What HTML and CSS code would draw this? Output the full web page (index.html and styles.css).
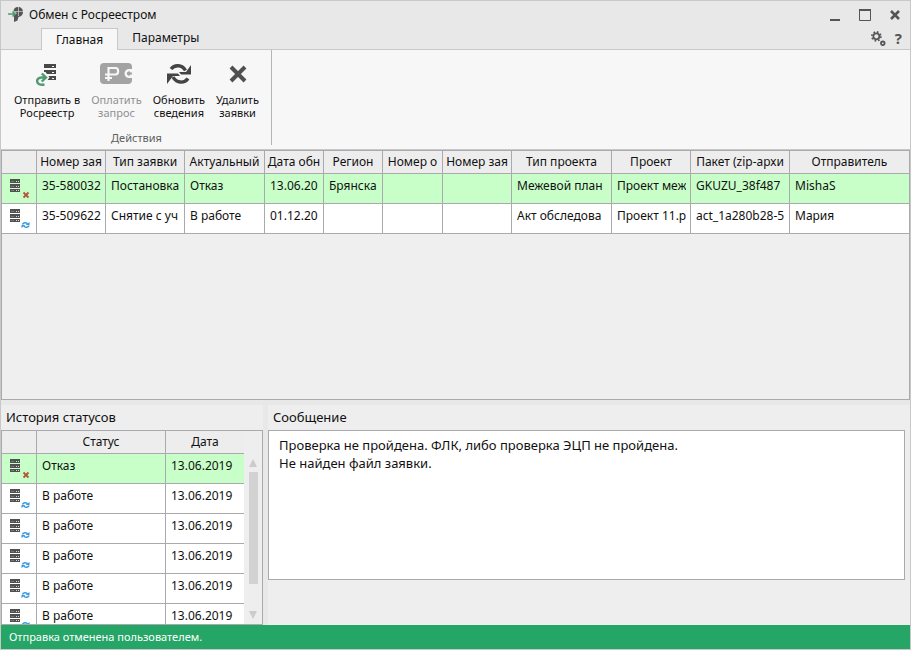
FILE: index.html
```
<!doctype html>
<html lang="ru">
<head>
<meta charset="utf-8">
<title>Обмен с Росреестром</title>
<link rel="stylesheet" href="styles.css">
</head>
<body>
<svg class="defs" width="0" height="0">
	<symbol id="server" viewBox="0 0 10 14">
		<path fill="#505050" d="M0 0h10v4H0zM0 5h10v4H0zM0 10h10v3H0z"/>
		<path fill="#d8d8d8" d="M6 2h1v1H6zM8 2h1v1H8zM6 7h1v1H6zM8 7h1v1H8zM6 11h1v1H6zM8 11h1v1H8z"/>
		<path fill="#777" d="M1 2h3v1H1zM1 7h3v1H1zM1 11h3v1H1z"/>
	</symbol>
	<symbol id="refused" viewBox="0 0 20 20">
		<use href="#server" width="10" height="14"/>
		<path stroke="#b5523b" stroke-width="1.800" d="M13.500 13.500l5 5M18.500 13.500l-5 5"/>
	</symbol>
	<symbol id="working" viewBox="0 0 20 20">
		<use href="#server" width="10" height="14"/>
		<path fill="none" stroke="#3a9ae0" stroke-width="1.500" d="M12.500 15.500c.5-2 4-2.500 5-.5M19 16.500c-.5 2-4 2.500-5 .5"/>
		<path fill="#3a9ae0" d="M19.500 13v3h-4zM11.500 19v-3h4z"/>
	</symbol>
</svg>
<div class="window">
	<header class="top">
		<div class="titlebar">
			<svg class="logo" width="16" height="16" viewBox="0 0 16 16">
				<path fill="#555" d="M10 0c3 0 5 2 5 5s-2 4.500-4.500 5l-1 3.500L6 15V9l-1-1.500h2L9 6 5.500 4.500C5.500 2 7 0 10 0z"/>
				<path fill="none" stroke="#e8e8e8" stroke-width=".6" d="M10.500 0v9M6 4.500h9"/>
				<path fill="none" stroke="#4e9a73" stroke-width="1.600" d="M0 7h7M4.500 4.500L7 7 4.500 9.500"/>
			</svg>
			<h1>Обмен с Росреестром</h1>
			<div class="winbuttons">
				<button aria-label="Свернуть"><svg width="14" height="14"><path fill="#555" d="M2 11h10v2H2z"/></svg></button>
				<button aria-label="Развернуть"><svg width="14" height="14"><path fill="none" stroke="#555" d="M1.500 1.500h11v11h-11z"/><path fill="#555" d="M1 1h12v2H1z"/></svg></button>
				<button aria-label="Закрыть"><svg width="14" height="14"><path stroke="#555" stroke-width="2.500" d="M3 3l8 8M11 3l-8 8"/></svg></button>
			</div>
		</div>
		<div class="tabs">
			<button class="tab active">Главная</button>
			<button class="tab">Параметры</button>
			<div class="tools">
				<button aria-label="Настройки"><svg width="15" height="15" viewBox="0 0 14 14">
					<circle cx="5" cy="5" r="2.800" fill="none" stroke="#555" stroke-width="1.600"/>
					<circle cx="5" cy="5" r="4.200" fill="none" stroke="#555" stroke-width="1.500" stroke-dasharray="1.600 1.700"/>
					<circle cx="11" cy="11.500" r="1.700" fill="none" stroke="#555" stroke-width="1.700"/>
				</svg></button>
				<button class="help" aria-label="Справка">?</button>
			</div>
		</div>
	</header>
	<div class="ribbon">
		<div class="group">
			<div class="actions">
				<button class="action">
					<svg width="32" height="32" viewBox="0 0 32 32">
						<path fill="#484848" d="M13 6h12v4H13zM13 12h12v4H13zM13 18h12v4H13z"/>
						<path fill="#f7f7f7" d="M21 8h2v1h-2zM21 14h2v1h-2zM21 20h2v1h-2zM10 14h4.500l4 5.500-4 5H10z"/>
						<path fill="none" stroke="#4e9a73" stroke-width="2.400" d="M13.500 26.500c-9 2-9.500-7-3-7h4M10.800 15.500l4.200 4-4.200 4"/>
					</svg>
					<span>Отправить в<br>Росреестр</span>
				</button>
				<button class="action" disabled>
					<svg width="32" height="32" viewBox="0 0 32 32">
						<rect x="0" y="5" width="32" height="21" rx="4" fill="#a3a3a3"/>
						<path fill="none" stroke="#f7f7f7" stroke-width="2.200" d="M8.500 23V10h7c3.500 0 3.500 6.500 0 6.500H5M5 20h7"/>
						<path fill="#f7f7f7" d="M32 11h-3a4.500 4.500 0 0 0 0 9h3v-3.500h-1.500a2 2 0 1 1 0-2H32z"/>
					</svg>
					<span>Оплатить<br>запрос</span>
				</button>
				<button class="action">
					<svg width="32" height="32" viewBox="0 0 32 32">
						<path fill="none" stroke="#444" stroke-width="3.400" d="M8 11c3.500-4.500 11-4.500 14.500 1.500M25 20.500c-3.500 5-11.500 5-15-1.500"/>
						<path fill="#444" d="M28 7v9.500H18l-2-2.500 7 0zM4 26V15.500h11l2 2.500H10z"/>
					</svg>
					<span>Обновить<br>сведения</span>
				</button>
				<button class="action">
					<svg width="32" height="32" viewBox="0 0 32 32"><path stroke="#505050" stroke-width="4" d="M9 9l14 14M23 9l-14 14"/></svg>
					<span>Удалить<br>заявки</span>
				</button>
			</div>
			<div class="caption">Действия</div>
		</div>
	</div>

	<div class="requests">
		<table class="grid">
			<colgroup>
				<col class="c-icon"><col class="c-num"><col class="c-type"><col class="c-status"><col class="c-date"><col class="c-region"><col class="c-obj"><col class="c-req"><col class="c-ptype"><col class="c-project"><col class="c-pack"><col>
			</colgroup>
			<tr>
				<th></th>
				<th><div>Номер зая</div></th>
				<th><div>Тип заявки</div></th>
				<th><div>Актуальный</div></th>
				<th><div>Дата обн</div></th>
				<th><div>Регион</div></th>
				<th><div>Номер о</div></th>
				<th><div>Номер зая</div></th>
				<th><div>Тип проекта</div></th>
				<th><div>Проект</div></th>
				<th><div>Пакет (zip-архи</div></th>
				<th><div>Отправитель</div></th>
			</tr>
			<tr class="selected">
				<td class="icon"><svg width="20" height="20"><use href="#refused"/></svg></td>
				<td><div>35-580032</div></td>
				<td><div>Постановка</div></td>
				<td><div>Отказ</div></td>
				<td><div>13.06.20</div></td>
				<td><div>Брянска</div></td>
				<td></td>
				<td></td>
				<td><div>Межевой план</div></td>
				<td><div>Проект меж</div></td>
				<td><div>GKUZU_38f487</div></td>
				<td><div>MishaS</div></td>
			</tr>
			<tr>
				<td class="icon"><svg width="20" height="20"><use href="#working"/></svg></td>
				<td><div>35-509622</div></td>
				<td><div>Снятие с уч</div></td>
				<td><div>В работе</div></td>
				<td><div>01.12.20</div></td>
				<td></td>
				<td></td>
				<td></td>
				<td><div>Акт обследова</div></td>
				<td><div>Проект 11.p</div></td>
				<td><div>act_1a280b28-5</div></td>
				<td><div>Мария</div></td>
			</tr>
		</table>
	</div>

	<div class="bottom">
		<section class="history">
			<h2>История статусов</h2>
			<div class="histbox">
				<table class="grid">
					<colgroup><col class="c-icon"><col class="c-state"><col></colgroup>
					<tr><th></th><th><div>Статус</div></th><th><div>Дата</div></th></tr>
					<tr class="selected"><td class="icon"><svg width="20" height="20"><use href="#refused"/></svg></td><td><div>Отказ</div></td><td><div>13.06.2019</div></td></tr>
					<tr><td class="icon"><svg width="20" height="20"><use href="#working"/></svg></td><td><div>В работе</div></td><td><div>13.06.2019</div></td></tr>
					<tr><td class="icon"><svg width="20" height="20"><use href="#working"/></svg></td><td><div>В работе</div></td><td><div>13.06.2019</div></td></tr>
					<tr><td class="icon"><svg width="20" height="20"><use href="#working"/></svg></td><td><div>В работе</div></td><td><div>13.06.2019</div></td></tr>
					<tr><td class="icon"><svg width="20" height="20"><use href="#working"/></svg></td><td><div>В работе</div></td><td><div>13.06.2019</div></td></tr>
					<tr><td class="icon"><svg width="20" height="20"><use href="#working"/></svg></td><td><div>В работе</div></td><td><div>13.06.2019</div></td></tr>
				</table>
				<div class="scroll">
					<svg width="10" height="10"><path fill="#ccc" d="M5 1l4 8H1z"/></svg>
					<div class="track"><div class="thumb"></div></div>
					<svg width="10" height="10"><path fill="#ccc" d="M1 1h8L5 9z"/></svg>
				</div>
			</div>
		</section>
		<section class="message">
			<h2><label for="msg">Сообщение</label></h2>
			<textarea id="msg" readonly>Проверка не пройдена. ФЛК, либо проверка ЭЦП не пройдена.
Не найден файл заявки.</textarea>
		</section>
	</div>
	<footer class="status">Отправка отменена пользователем.</footer>
</div>
</body>
</html>
```
FILE: styles.css
```
* {
  box-sizing: border-box;
}
body {
  margin: 0;
  background-color: #e8e8e8;
  font-family: "Noto Sans", "Open Sans", sans-serif;
  font-size: 13px;
  line-height: 18px;
  color: #111;
}
button {
  padding: 0;
  border: 0;
  background: none;
  font: inherit;
  color: inherit;
}
svg {
  display: block;
}
.defs {
  position: absolute;
}
h1, h2 {
  margin: 0;
  font-size: 13px;
  font-weight: normal;
}
.window {
  display: flex;
  flex-direction: column;
  height: 100vh;
  border: 1px solid #c8c8c8;
}

/* title and tabs */
.top {
  height: 49px;
  border-bottom: 1px solid #c8c8c8;
}
.titlebar {
  display: flex;
  align-items: center;
  height: 27px;
  padding: 0 8px 0 7px;
}
.titlebar h1 {
  flex: 1;
  margin-left: 5px;
  font-size: 12px;
}
.winbuttons {
  display: flex;
  gap: 16px;
}
.tabs {
  display: flex;
  height: 21px;
  padding: 0 8px 0 40px;
  font-size: 12px;
}
.tab {
  height: 20px;
  padding: 0 14px;
}
.tab.active {
  height: 22px;
  border: 1px solid #c8c8c8;
  border-bottom: 0;
  background-color: #f7f7f7;
}
.tools {
  display: flex;
  gap: 9px;
  align-items: center;
  height: 20px;
  margin-left: auto;
}
.help {
  font-size: 15px;
  font-weight: bold;
  color: #555;
}

/* ribbon */
.ribbon {
  display: flex;
  height: 100px;
  border-bottom: 1px solid #c8c8c8;
  background-color: #f7f7f7;
}
.group {
  height: 95px;
  padding: 8px 7px 0 8px;
  border-right: 1px solid #b4b4b4;
}
.actions {
  display: flex;
  gap: 1px;
}
.action {
  display: flex;
  flex-direction: column;
  align-items: center;
  padding: 0 5px;
  font-size: 11px;
  line-height: 13px;
}
.action svg {
  margin-bottom: 3px;
}
.action:disabled {
  color: #909090;
}
.caption {
  margin-top: 10px;
  font-size: 11px;
  text-align: center;
  color: #606060;
}

/* grids */
.grid {
  width: 100%;
  table-layout: fixed;
  border-collapse: separate;
  border-spacing: 0;
}
.grid th {
  height: 23px;
  padding: 0 2px;
  border-right: 1px solid #aaaaae;
  border-bottom: 1px solid #aaaaae;
  background-color: #ededed;
  font-size: 12px;
  font-weight: normal;
}
.grid td {
  height: 30px;
  padding: 3px 4px 0 5px;
  border-right: 1px solid #aaaaae;
  border-bottom: 1px solid #aaaaae;
  background-color: #fff;
  font-size: 12px;
  vertical-align: top;
}
.grid .selected td {
  background-color: #c8ffc8;
}
.grid td.icon {
  padding: 5px 0 0 8px;
}
.grid th:last-child, .grid td:last-child {
  border-right: 0;
}
.grid div {
  overflow: hidden;
  white-space: nowrap;
}
.c-icon { width: 35px; }
.c-num, .c-req { width: 69px; }
.c-type, .c-project { width: 79px; }
.c-status { width: 80px; }
.c-date, .c-region { width: 59px; }
.c-obj { width: 60px; }
.c-ptype { width: 100px; }
.c-pack { width: 99px; }
.c-state { width: 129px; }

.requests {
  flex: 1;
  min-height: 120px;
  border: 1px solid #aaaaae;
  background-color: #efefef;
}

/* bottom panels */
.bottom {
  display: flex;
  gap: 5px;
  height: 225px;
  padding-top: 5px;
}
.bottom h2 {
  height: 25px;
  padding: 3px 5px 0;
}
.history {
  display: flex;
  flex-direction: column;
  width: 262px;
  background-color: #eeeeee;
}
.histbox {
  display: flex;
  flex: 1;
  min-height: 0;
  overflow: hidden;
  border: 1px solid #aaaaae;
}
.histbox .grid {
  align-self: flex-start;
  width: 242px;
}
.scroll {
  display: flex;
  flex-direction: column;
  align-items: center;
  flex: 1;
  padding: 27px 0 4px;
}
.track {
  flex: 1;
  padding-top: 4px;
}
.thumb {
  width: 9px;
  height: 112px;
  background-color: #d2d2d2;
}
.message {
  flex: 1;
  padding-right: 5px;
  background-color: #eeeeee;
}
.message textarea {
  display: block;
  width: 100%;
  height: 150px;
  padding: 5px 10px;
  border: 1px solid #aaaaae;
  border-radius: 0;
  outline: 0;
  resize: none;
  background-color: #fff;
  font: inherit;
  color: inherit;
}
.status {
  height: 24px;
  padding: 3px 8px;
  background-color: #25a566;
  font-size: 11px;
  color: #fff;
}
```
